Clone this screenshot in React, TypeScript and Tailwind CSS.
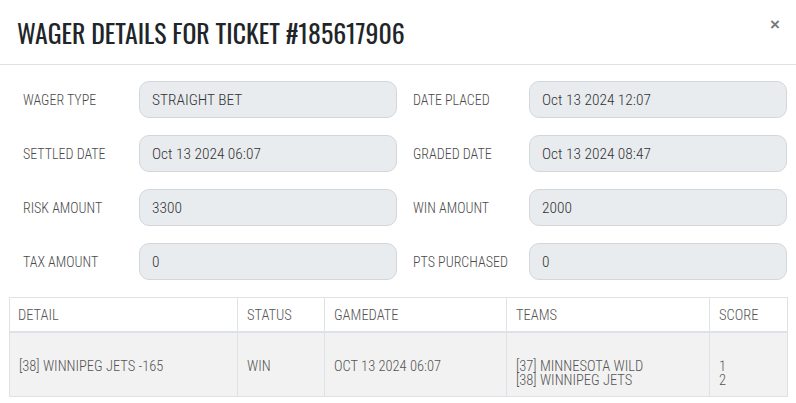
import React from "react";

const rc = "font-['Roboto_Condensed',_'Liberation_Sans',_sans-serif]";

function Field({ label, value }: { label: string; value: string }) {
  return (
    <div className="flex items-center">
      <div className={`w-[116px] shrink-0 pt-[2px] text-[14px] font-light text-[#4a4a4a] ${rc}`}>{label}</div>
      <div
        className={`flex h-[37px] flex-1 items-center rounded-[10px] border border-[#d3d7db] bg-[#e9ecef] px-3 pt-[3px] text-[15.4px] font-[350] text-[#333] ${rc}`}
      >
        {value}
      </div>
    </div>
  );
}

export default function App() {
  const cell = "border-l border-[#dee2e6] px-[9px]";
  return (
    <div className="h-[403px] w-[796px] overflow-hidden bg-white">
      <div className="relative flex h-[65px] items-center border-b border-[#dee2e6] pl-[17px]">
        <h4 className="font-['Oswald',_sans-serif] text-[25.8px] font-normal text-[#212529]">
          WAGER DETAILS FOR TICKET #185617906
        </h4>
        <span className="absolute right-[16px] top-[12px] font-['Liberation_Sans',_sans-serif] text-[17px] font-bold text-[#7a7a7a]">
          ×
        </span>
      </div>
      <div className="grid grid-cols-2 gap-x-[16px] gap-y-[17px] pl-[23px] pr-[9px] pt-[16px]">
        <Field label="WAGER TYPE" value="STRAIGHT BET" />
        <Field label="DATE PLACED" value="Oct 13 2024 12:07" />
        <Field label="SETTLED DATE" value="Oct 13 2024 06:07" />
        <Field label="GRADED DATE" value="Oct 13 2024 08:47" />
        <Field label="RISK AMOUNT" value="3300" />
        <Field label="WIN AMOUNT" value="2000" />
        <Field label="TAX AMOUNT" value="0" />
        <Field label="PTS PURCHASED" value="0" />
      </div>
      <div className={`ml-[9px] mt-[17px] w-[779px] border border-[#dee2e6] text-[14.5px] font-light text-[#555] ${rc}`}>
        <div className="grid h-[35px] grid-cols-[227px_87px_182px_203px_1fr] items-center border-b-2 border-[#dee2e6] bg-white">
          <div className="-ml-px px-[9px] pt-[3px]">DETAIL</div>
          <div className={`${cell} flex h-full items-center pt-[3px]`}>STATUS</div>
          <div className={`${cell} flex h-full items-center pt-[3px]`}>GAMEDATE</div>
          <div className={`${cell} flex h-full items-center pt-[3px]`}>TEAMS</div>
          <div className={`${cell} flex h-full items-center pt-[3px]`}>SCORE</div>
        </div>
        <div className="grid h-[63px] grid-cols-[227px_87px_182px_203px_1fr] bg-[#f2f2f2]">
          <div className="flex items-center px-[9px] pt-[4px]">[38] WINNIPEG JETS -165</div>
          <div className={`${cell} flex items-center pt-[4px]`}>WIN</div>
          <div className={`${cell} flex items-center pt-[4px]`}>OCT 13 2024 06:07</div>
          <div className={`${cell} flex flex-col justify-center pt-[18px] leading-[14px]`}>
            <span>[37] MINNESOTA WILD</span>
            <span>[38] WINNIPEG JETS</span>
          </div>
          <div className={`${cell} flex flex-col justify-center pt-[18px] leading-[14px]`}>
            <span>1</span>
            <span>2</span>
          </div>
        </div>
      </div>
    </div>
  );
}
